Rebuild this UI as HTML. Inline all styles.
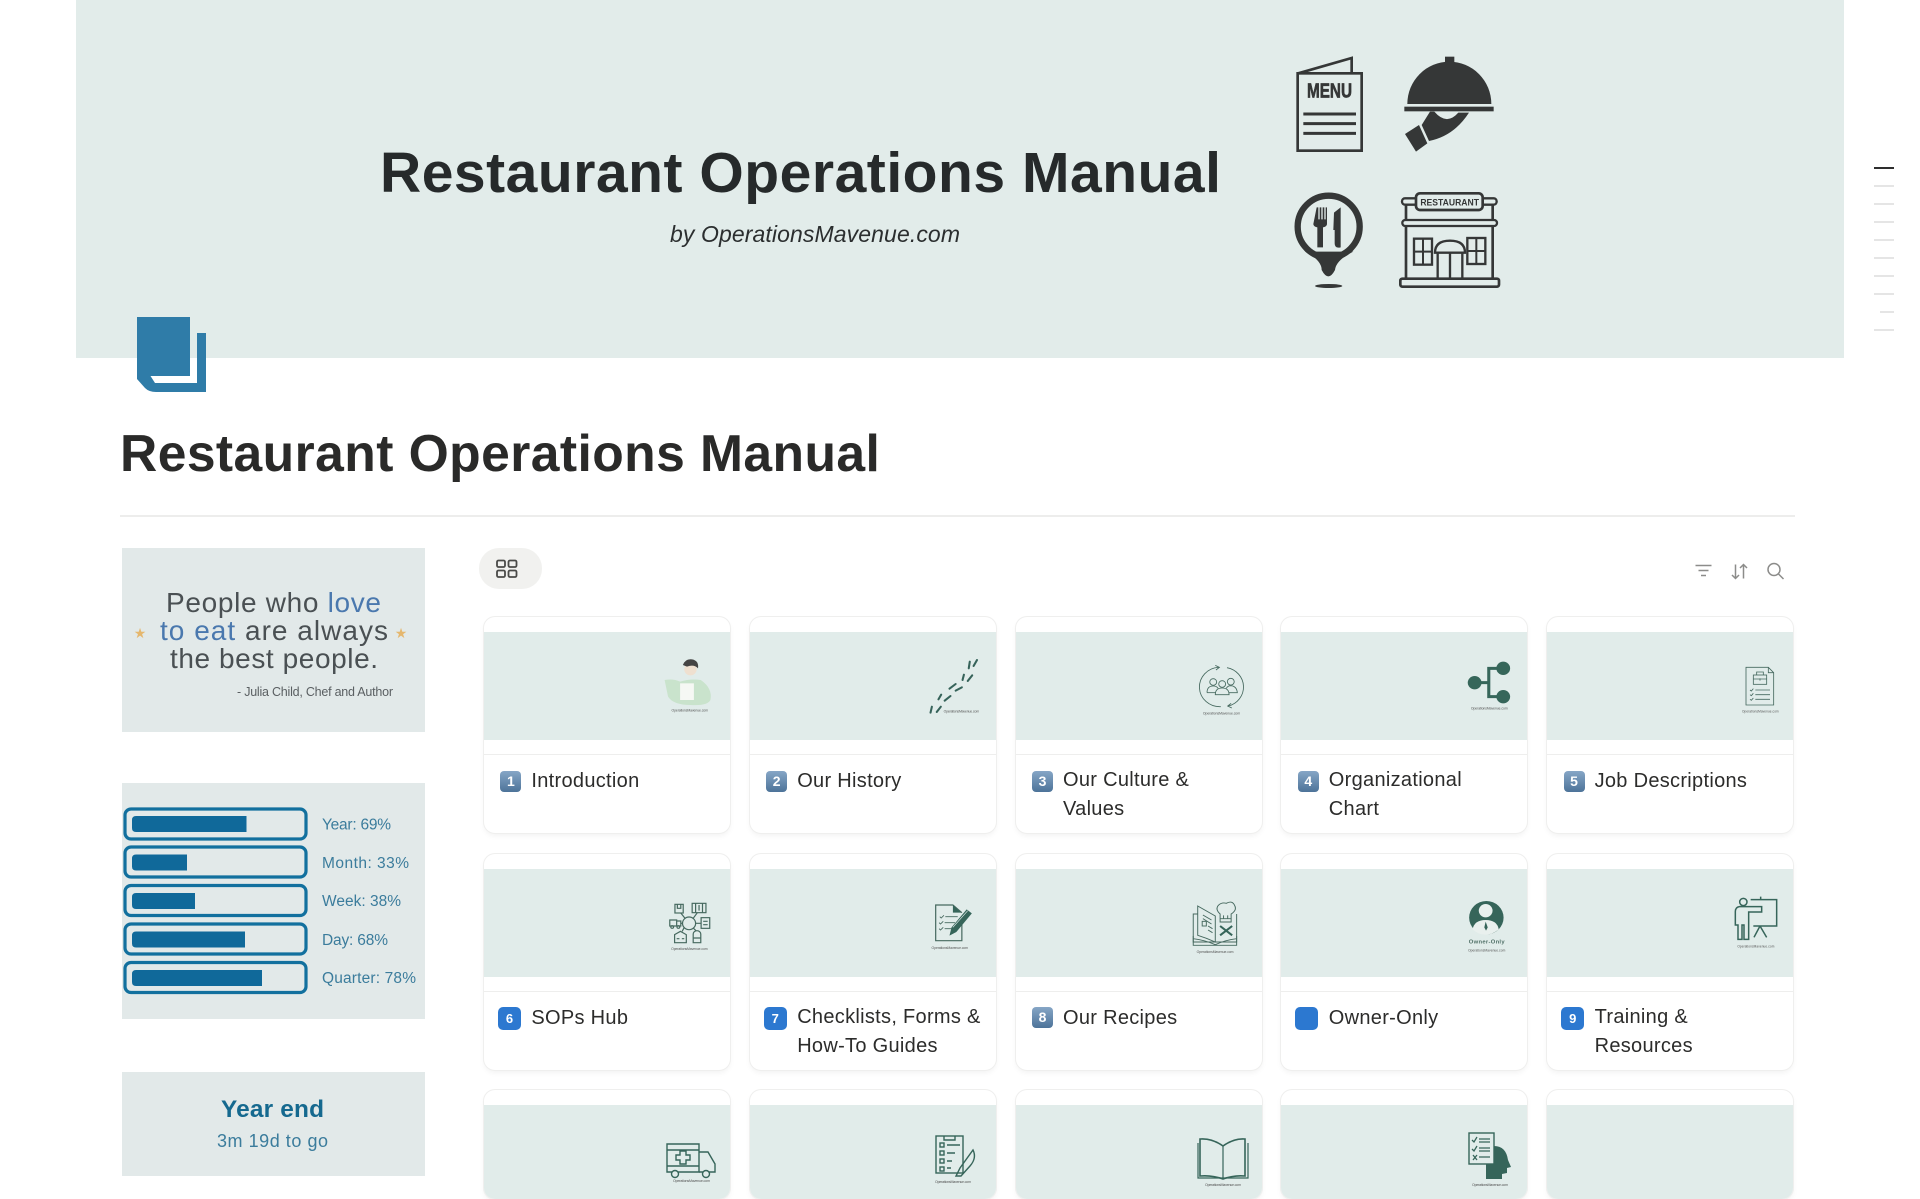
<!DOCTYPE html>
<html lang="en">
<head>
<meta charset="utf-8">
<title>Restaurant Operations Manual</title>
<style>
html,body{margin:0;padding:0;width:1920px;height:1199px;overflow:hidden;background:#fff;font-family:"Liberation Sans",sans-serif;color:#2c2c2b}
#page{position:relative;width:1920px;height:1199px;overflow:hidden;background:#fff}
.abs{position:absolute}
#banner{left:76px;top:0;width:1768px;height:358px;background:#e2ecea}
#h1{left:120px;top:421px;margin:0;font-size:51.6px;line-height:64px;font-weight:700;letter-spacing:.43px;color:#2a2a29;white-space:nowrap}
#rule{left:120px;top:515px;width:1675px;height:2px;background:#ededec}
.side{left:122px;width:303px;background:#e2e9e9}
#tab{left:479px;top:548px;width:63px;height:41px;border-radius:20px;background:#f1f1ef}
.card{position:absolute;width:246px;height:216px;background:#fff;border-radius:11px;box-shadow:0 0 0 1px #efefee,0 3px 6px rgba(0,0,0,.05);overflow:hidden}
.card.r3{height:109px}
.card .img{position:absolute;left:0;top:15px;width:100%;height:108px;background:#e1ecea}
.card .ln{position:absolute;left:0;top:137px;width:100%;height:1px;background:#eeeeed}
.card .t{position:absolute;left:47.4px;top:149px;font-size:20px;line-height:29px;letter-spacing:.3px;white-space:nowrap;color:#2c2c2b}
.card .t.s{top:150px}
.k{position:absolute;left:16.4px;top:153.5px;width:21px;height:21px;border-radius:4px;background:linear-gradient(#86a6c6,#4d7399);color:#fff;font-size:14px;font-weight:700;line-height:21px;text-align:center}
.b{position:absolute;left:14px;top:153px;width:23px;height:23px;border-radius:5px;background:#2c78d0;color:#fff;font-size:13px;font-weight:700;line-height:23px;text-align:center}
.toc{position:absolute;height:2px;background:#e5e5e5;left:1874px;width:20px}
svg#o{position:absolute;left:0;top:0;width:1920px;height:1199px;pointer-events:none}
</style>
</head>
<body>
<div id="page">
<div class="abs" id="banner"></div>
<div class="abs side" style="top:548px;height:184px"></div>
<div class="abs side" style="top:783px;height:236px"></div>
<div class="abs side" style="top:1072px;height:104px"></div>
<h1 class="abs" id="h1">Restaurant Operations Manual</h1>
<div class="abs" id="rule"></div>
<div class="abs" id="tab"></div>

<div class="toc" style="top:167px;background:#2e2e2e"></div>
<div class="toc" style="top:185px"></div>
<div class="toc" style="top:203px"></div>
<div class="toc" style="top:221px"></div>
<div class="toc" style="top:239px"></div>
<div class="toc" style="top:257px"></div>
<div class="toc" style="top:275px"></div>
<div class="toc" style="top:293px"></div>
<div class="toc" style="left:1880px;width:14px;top:311px"></div>
<div class="toc" style="top:329px"></div>

<!-- row 1 -->
<div class="card" style="left:484px;top:617px"><div class="img"></div><div class="ln"></div><div class="k">1</div><div class="t s">Introduction</div></div>
<div class="card" style="left:749.8px;top:617px"><div class="img"></div><div class="ln"></div><div class="k">2</div><div class="t s">Our History</div></div>
<div class="card" style="left:1015.6px;top:617px"><div class="img"></div><div class="ln"></div><div class="k">3</div><div class="t">Our Culture &amp;<br>Values</div></div>
<div class="card" style="left:1281.4px;top:617px"><div class="img"></div><div class="ln"></div><div class="k">4</div><div class="t">Organizational<br>Chart</div></div>
<div class="card" style="left:1547.2px;top:617px"><div class="img"></div><div class="ln"></div><div class="k">5</div><div class="t s">Job Descriptions</div></div>
<!-- row 2 -->
<div class="card" style="left:484px;top:853.5px"><div class="img"></div><div class="ln"></div><div class="b">6</div><div class="t s">SOPs Hub</div></div>
<div class="card" style="left:749.8px;top:853.5px"><div class="img"></div><div class="ln"></div><div class="b">7</div><div class="t">Checklists, Forms &amp;<br>How-To Guides</div></div>
<div class="card" style="left:1015.6px;top:853.5px"><div class="img"></div><div class="ln"></div><div class="k">8</div><div class="t s">Our Recipes</div></div>
<div class="card" style="left:1281.4px;top:853.5px"><div class="img"></div><div class="ln"></div><div class="b"></div><div class="t s">Owner-Only</div></div>
<div class="card" style="left:1547.2px;top:853.5px"><div class="img"></div><div class="ln"></div><div class="b">9</div><div class="t">Training &amp;<br>Resources</div></div>
<!-- row 3 -->
<div class="card r3" style="left:484px;top:1090px"><div class="img"></div></div>
<div class="card r3" style="left:749.8px;top:1090px"><div class="img"></div></div>
<div class="card r3" style="left:1015.6px;top:1090px"><div class="img"></div></div>
<div class="card r3" style="left:1281.4px;top:1090px"><div class="img"></div></div>
<div class="card r3" style="left:1547.2px;top:1090px"><div class="img"></div></div>

<svg id="o" viewBox="0 0 1920 1199" xmlns="http://www.w3.org/2000/svg" font-family="Liberation Sans, sans-serif">
<!-- banner text -->
<text x="380" y="192" font-size="57" font-weight="700" fill="#262a2b" textLength="841">Restaurant Operations Manual</text>
<text x="670" y="242" font-size="23" font-style="italic" fill="#2b2e2f" textLength="290">by OperationsMavenue.com</text>

<!-- banner icons -->
<g transform="translate(1250 30) scale(.33333)" fill="none" stroke="#353737">
  <polyline points="145,130 305,84 305,130" stroke-width="8"/>
  <rect x="143" y="130" width="192" height="232" stroke-width="8"/>
  <text x="171" y="203" font-size="62" font-weight="700" fill="#353737" stroke="#353737" stroke-width="2" textLength="135" lengthAdjust="spacingAndGlyphs">MENU</text>
  <path d="M160 252H318M160 281H318M160 310H318" stroke-width="9"/>
  <g fill="#353737" stroke="none">
    <rect x="585" y="80" width="28" height="25"/>
    <path d="M472 222A126 127 0 0 1 724 222Z"/>
    <rect x="463" y="230" width="268" height="14"/>
    <polygon points="465,312 507,285 532,340 498,365"/>
    <path d="M540 245L515 285L537 333Q612 318 657 248H625Q590 288 553 245Z"/>
  </g>
  <circle cx="236" cy="590" r="93" stroke-width="19"/>
  <g fill="#353737" stroke="none">
    <path d="M165 665Q215 690 215 720Q235 758 255 720Q258 690 310 665Z"/>
    <ellipse cx="236" cy="768" rx="41" ry="6"/>
    <path d="M200 532h5v36h4v-36h5v36h4v-36h5v36h4v-36h4v50q0 8-12 10v60h-17v-60q-12-2-12-10z"/>
    <path d="M252 548L272 532V652Q254 656 254 640V600H250Z"/>
  </g>
  <rect x="456" y="505" width="284" height="19" rx="9" stroke-width="7"/>
  <rect x="498" y="490" width="200" height="50" rx="12" stroke-width="8" fill="#e2ecea"/>
  <text x="511" y="526" font-size="27" font-weight="700" fill="#353737" stroke="none" textLength="176" lengthAdjust="spacingAndGlyphs">RESTAURANT</text>
  <path d="M468 525V570M728 525V570M468 588V745M728 588V745" stroke-width="8"/>
  <rect x="457" y="570" width="284" height="18" rx="9" stroke-width="7"/>
  <rect x="492" y="626" width="54" height="78" stroke-width="7"/>
  <path d="M519 626V704M492 665H546" stroke-width="6"/>
  <rect x="652" y="624" width="54" height="78" stroke-width="7"/>
  <path d="M679 624V702M652 663H706" stroke-width="6"/>
  <path d="M555 668Q555 632 600 632Q645 632 645 668Z" stroke-width="7"/>
  <path d="M563 668V746M637 668V746M600 668V746" stroke-width="7"/>
  <rect x="451" y="746" width="296" height="24" rx="6" stroke-width="8"/>
</g>

<!-- page icon -->
<path d="M137 317H190V376H150.5L155 383H197V333H206V392H156Q149 392 145 388L137 379Z" fill="#2f7ca8"/>

<!-- quote -->
<g font-size="28" fill="#4a5053" style="font-weight:400">
  <text x="166" y="612" textLength="215"><tspan>People who </tspan><tspan fill="#4a78ae">love</tspan></text>
  <text x="160" y="640" textLength="228"><tspan fill="#4a78ae">to eat</tspan><tspan> are always</tspan></text>
  <text x="170" y="668" textLength="208">the best people.</text>
</g>
<text x="237" y="696" font-size="12.5" fill="#5a5f62" textLength="156">- Julia Child, Chef and Author</text>
<text x="140" y="638" font-size="14" fill="#e5b76e" text-anchor="middle">★</text>
<text x="401" y="638" font-size="14" fill="#e5b76e" text-anchor="middle">★</text>

<!-- progress -->
<g fill="none" stroke="#12709e" stroke-width="3.2">
  <rect x="125" y="809" width="181" height="30" rx="6"/>
  <rect x="125" y="847" width="181" height="30" rx="6"/>
  <rect x="125" y="885.5" width="181" height="30" rx="6"/>
  <rect x="125" y="924" width="181" height="30" rx="6"/>
  <rect x="125" y="962.5" width="181" height="30" rx="6"/>
</g>
<g fill="#10699a">
  <path d="M136 816H246.500V832H136Q132 832 132 828V820Q132 816 136 816Z"/>
  <path d="M136 854.500H187V870.500H136Q132 870.500 132 866.500V858.500Q132 854.500 136 854.500Z"/>
  <path d="M136 893H195V909H136Q132 909 132 905V897Q132 893 136 893Z"/>
  <path d="M136 931.500H245V947.500H136Q132 947.500 132 943.500V935.500Q132 931.500 136 931.500Z"/>
  <path d="M136 970H262V986H136Q132 986 132 982V974Q132 970 136 970Z"/>
</g>
<g font-size="15.500" fill="#3b7c9c">
  <text x="322" y="829.500" textLength="69">Year: 69%</text>
  <text x="322" y="868" textLength="87">Month: 33%</text>
  <text x="322" y="906" textLength="79">Week: 38%</text>
  <text x="322" y="945" textLength="66">Day: 68%</text>
  <text x="322" y="983" textLength="94">Quarter: 78%</text>
</g>
<text x="221" y="1117" font-size="24.400" font-weight="700" fill="#15698f" textLength="103">Year end</text>
<text x="217" y="1147" font-size="18" fill="#3b7c9c" textLength="111">3m 19d to go</text>

<!-- view tab icon -->
<g fill="none" stroke="#4a4a48" stroke-width="1.800">
  <rect x="497" y="560.500" width="8" height="6.500" rx="1.500"/>
  <rect x="508.500" y="560.500" width="8" height="6.500" rx="1.500"/>
  <rect x="497" y="570.500" width="8" height="6.500" rx="1.500"/>
  <rect x="508.500" y="570.500" width="8" height="6.500" rx="1.500"/>
</g>
<!-- toolbar -->
<g fill="none" stroke="#8c8c8a" stroke-width="1.500">
  <path d="M1695.500 565.500H1711.500M1698.500 570.500H1708.500M1701 575.500H1706"/>
  <path d="M1735.500 564.500V578.500M1732 575L1735.500 578.500L1739 575M1743.500 578.500V564.500M1740 568L1743.500 564.500L1747 568"/>
  <circle cx="1774" cy="569.500" r="6"/>
  <path d="M1778.500 574L1783.500 579"/>
</g>

<!-- zoom-4 thumbs -->
<g transform="translate(470 600) scale(.34444 .33333)">
  <path d="M565 240Q590 235 610 245Q640 235 670 240Q705 265 698 300Q690 318 640 315Q590 315 575 290Z" fill="#c9e3cc"/>
  <circle cx="640" cy="208" r="18" fill="#efe0d0"/>
  <path d="M618 195Q625 175 645 178Q665 182 662 205Q650 192 630 200Z" fill="#444"/>
  <rect x="610" y="250" width="40" height="50" fill="#f6f8f4"/>
  <text x="585" y="335" font-size="10" fill="#555" textLength="106">OperationsMavenue.com</text>
  <g stroke="#36635a" stroke-width="6" stroke-linecap="round">
    <path d="M1448 205L1451 185M1462 198L1472 180M1430 240L1434 224M1445 243L1458 226M1392 266L1410 252M1410 272L1428 262M1360 298L1368 284M1378 302L1395 288M1337 338L1341 320M1355 336L1367 320"/>
  </g>
  <text x="1375" y="338" font-size="10" fill="#555" textLength="103">OperationsMavenue.com</text>
</g>

<!-- zoom-5 thumbs -->
<g transform="translate(1010 600) scale(.34444 .33333)" fill="none" stroke="#46695f" stroke-width="2.500">
  <path d="M606 202A59 59 0 0 0 612 320"/>
  <path d="M630 203A59 59 0 0 1 634 318"/>
  <path d="M596 196L608 202L598 210M642 310L632 318L644 324"/>
  <circle cx="590" cy="246" r="10"/><circle cx="616" cy="252" r="10"/><circle cx="641" cy="245" r="10"/>
  <path d="M572 278Q572 258 590 258Q600 258 604 265M628 265Q632 257 641 257Q658 258 660 278H634M596 284Q596 264 616 264Q636 264 636 284Z"/>
  <path d="M572 278H598"/>
  <text x="560" y="343" font-size="10" fill="#555" stroke="none" textLength="108">OperationsMavenue.com</text>
  <g fill="#36665a" stroke="none">
    <circle cx="1349" cy="248" r="20"/><circle cx="1432" cy="205" r="20"/><circle cx="1432" cy="290" r="20"/>
  </g>
  <path d="M1349 248H1390M1432 205H1390V290H1432" stroke="#36665a" stroke-width="9"/>
  <text x="1338" y="328" font-size="10" fill="#555" stroke="none" textLength="107">OperationsMavenue.com</text>
</g>

<!-- zoom-12 thumbs -->
<g transform="translate(1540 610) scale(.33333)" fill="none" stroke="#46695f" stroke-width="2.500">
  <path d="M618 172H685L701 188V285H618Z"/><path d="M685 172V188H701"/>
  <rect x="640" y="195" width="40" height="28"/>
  <path d="M650 195V186H670V195M640 207H680M660 205V212"/>
  <path d="M630 240L634 243L640 236M630 254L634 257L640 250M630 268L634 271L640 264M646 240H690M646 254H690M646 268H690"/>
  <text x="606" y="307" font-size="9.500" fill="#555" stroke="none" textLength="110">OperationsMavenue.com</text>
  <g stroke-width="4.500" stroke="#36655a">
    <circle cx="610" cy="876" r="11"/>
    <path d="M632 869H710V948H640M662 860V869M660 948L642 982M660 948L680 982"/>
    <path d="M598 890H665V906H626V988H612V945H606V988H594V945H586V905Q586 892 598 890Z"/>
  </g>
  <text x="592" y="1012" font-size="9.500" fill="#555" stroke="none" textLength="111">OperationsMavenue.com</text>
</g>

<!-- zoom-6 thumbs -->
<g transform="translate(470 840) scale(.34444 .33333)" fill="none" stroke="#46695f" stroke-width="3.500">
  <circle cx="636" cy="250" r="19"/>
  <rect x="595" y="193" width="24" height="26"/><path d="M602 193V205H612V193"/>
  <rect x="645" y="190" width="40" height="28"/><path d="M655 190V218M675 190V218M665 195V212"/>
  <rect x="671" y="233" width="25" height="32"/><path d="M677 244H690M677 254H690"/>
  <path d="M580 240H600V258H580ZM600 243H612V258H600"/><circle cx="587" cy="261" r="4"/><circle cx="605" cy="261" r="4"/>
  <path d="M594 284L611 274L628 284V308H594ZM600 296H608M615 296H622"/>
  <path d="M648 282a11 10 0 0 1 22 0v26h-22ZM648 294H670"/>
  <path d="M612 219L625 236M660 218L648 235M655 250H671M617 250H612M622 262L616 274M648 264L656 272"/>
  <text x="584" y="330" font-size="10" fill="#555" stroke="none" textLength="106">OperationsMavenue.com</text>
  <path d="M1428 240V302H1352V195H1402L1428 218" stroke-width="3.500"/>
  <path d="M1402 195L1426 218H1402Z" fill="#36655a" stroke="none"/>
  <path d="M1364 230L1368 234L1376 226M1362 248L1366 252L1374 244M1362 266L1366 270L1374 262M1380 230H1416M1378 248H1408M1378 266H1398" stroke-width="2.500"/>
  <path d="M1392 287L1398 262L1442 208L1457 220L1412 276Z" fill="#36655a" stroke="none"/>
  <path d="M1402 262L1445 212" stroke="#e1ecea" stroke-width="2"/>
  <text x="1340" y="327" font-size="10" fill="#555" stroke="none" textLength="106">OperationsMavenue.com</text>
</g>

<!-- zoom-7 thumbs -->
<g transform="translate(1010 840) scale(.34444 .33333)" fill="none" stroke="#46695f" stroke-width="2.800">
  <path d="M545 198L596 228V306Q570 294 545 286Z"/>
  <path d="M545 222H532V306H596M596 306H658V222"/>
  <path d="M532 296Q565 300 596 314Q625 300 658 296M532 288V316H658V288"/>
  <path d="M560 225L585 240M560 236L585 252M575 258L588 266M575 270L588 278"/>
  <rect x="558" y="244" width="12" height="14"/>
  <path d="M610 222Q595 208 605 196Q615 186 628 190Q645 180 652 196Q660 210 642 222V246H610Z"/>
  <path d="M610 236H642M620 226V236M632 226V236"/>
  <path d="M610 258L645 286M645 258L610 286" stroke-width="6" stroke="#36655a"/>
  <text x="542" y="339" font-size="10" fill="#555" stroke="none" textLength="107">OperationsMavenue.com</text>
  <circle cx="1383" cy="233" r="50" fill="#36655a" stroke="none"/>
  <circle cx="1381" cy="212" r="20" fill="#e9f0ee" stroke="none"/>
  <path d="M1343 268Q1348 240 1381 240Q1414 240 1419 268Q1400 284 1381 284Q1360 284 1343 268Z" fill="#e9f0ee" stroke="none"/>
  <path d="M1381 245L1377 262L1382 272L1387 262Z" fill="#36655a" stroke="none"/>
  <text x="1332" y="310" font-size="17" font-weight="700" fill="#4f6f66" stroke="none" textLength="104">Owner-Only</text>
  <text x="1330" y="334" font-size="9.500" fill="#555" stroke="none" textLength="108">OperationsMavenue.com</text>
</g>

<!-- row 3 thumbs, page coordinates -->
<g fill="none" stroke="#36655a" stroke-width="1.400">
  <path d="M667 1144H699V1172H667Z"/><path d="M667 1150H699M667 1166H699"/>
  <path d="M699 1152H708L715 1164V1172H699"/>
  <path d="M680 1151H686V1155H690V1160H686V1164H680V1160H676V1155H680Z"/>
  <circle cx="675" cy="1174" r="3.500" fill="#e1ecea"/><circle cx="706" cy="1174" r="3.500" fill="#e1ecea"/>
  <text x="673" y="1182" font-size="3.600" fill="#555" stroke="none" textLength="37">OperationsMavenue.com</text>

  <rect x="936" y="1136" width="27" height="37"/>
  <path d="M944 1136V1140H955V1136"/>
  <rect x="940" y="1143" width="4" height="4"/><rect x="940" y="1151" width="4" height="4"/><rect x="940" y="1159" width="4" height="4"/><rect x="940" y="1167" width="4" height="4"/>
  <path d="M947 1145H960M947 1153H955M947 1161H952M947 1168H951"/>
  <path d="M973 1150Q977 1158 970 1166L961 1176L956 1176L960 1168Z"/>
  <text x="935" y="1183" font-size="3.600" fill="#555" stroke="none" textLength="36">OperationsMavenue.com</text>

  <path d="M1223 1146Q1212 1138 1200 1139V1176Q1212 1175 1223 1179Q1234 1175 1245 1176V1139Q1234 1138 1223 1146Z" stroke-width="1.600"/>
  <path d="M1223 1146V1179M1198 1143V1178H1248V1143" stroke-width="1.200"/>
  <text x="1205" y="1186" font-size="3.600" fill="#555" stroke="none" textLength="36">OperationsMavenue.com</text>

  <rect x="1469" y="1133" width="25" height="31"/>
  <path d="M1472 1140L1474 1142L1477 1137M1472 1149L1474 1151L1477 1146M1473 1155L1477 1160M1477 1155L1473 1160M1479 1139H1490M1479 1142H1490M1479 1148H1490M1479 1151H1490M1479 1157H1490" stroke-width="1.300"/>
  <path d="M1494 1146Q1506 1146 1508 1160L1511 1167L1507 1168V1173L1502 1174V1179H1486V1164H1494Z" fill="#36655a" stroke="none"/>
  <text x="1472" y="1186" font-size="3.600" fill="#555" stroke="none" textLength="36">OperationsMavenue.com</text>
</g>
</svg>
</div>
</body>
</html>
